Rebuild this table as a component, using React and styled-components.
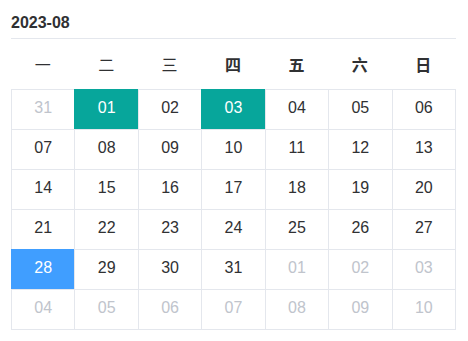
import styled, { createGlobalStyle } from "styled-components";

const GlobalStyle = createGlobalStyle`
  html, body {
    margin: 0;
    padding: 0;
    background: #ffffff;
  }
  body {
    font-family: "Liberation Sans", Arial, "Noto Sans CJK SC", sans-serif;
    color: #303133;
  }
`;

const COLORS = {
  text: "#303133",
  muted: "#c0c4cc",
  line: "#e4e7ed",
  teal: "#07a69b",
  blue: "#409eff",
};

const Wrapper = styled.div`
  width: 445px;
  margin-left: 11px;
`;

const Title = styled.div`
  padding: 12px 0 4px;
  line-height: 22px;
  font-size: 16px;
  font-weight: bold;
  color: ${COLORS.text};
  border-bottom: 1px solid ${COLORS.line};
`;

const WeekRow = styled.div`
  display: grid;
  grid-template-columns: repeat(7, 1fr);
  height: 50px;
  margin-right: 1px;
`;

const WeekDay = styled.div`
  display: flex;
  align-items: center;
  justify-content: center;
  padding-bottom: 1px;
  font-family: "Noto Sans CJK SC", sans-serif;
  font-size: 16px;
  font-weight: ${(p) => (p.$heavy ? 700 : 400)};
  color: ${COLORS.text};
`;

const Grid = styled.div`
  display: grid;
  grid-template-columns: repeat(7, 1fr);
  grid-auto-rows: 40px;
  border-right: 1px solid ${COLORS.line};
  border-bottom: 1px solid ${COLORS.line};
`;

const fills = { teal: COLORS.teal, blue: COLORS.blue };

const Cell = styled.div`
  box-sizing: border-box;
  display: flex;
  align-items: center;
  justify-content: center;
  padding-bottom: 3px;
  font-size: 16px;
  border-left: 1px solid ${(p) => (p.$fill ? "transparent" : COLORS.line)};
  border-top: 1px solid ${(p) => (p.$fill ? "transparent" : COLORS.line)};
  background: ${(p) => (p.$fill ? fills[p.$fill] : "transparent")};
  color: ${(p) => (p.$fill ? "#ffffff" : p.$muted ? COLORS.muted : COLORS.text)};
`;

const weekDays = [
  { label: "一" },
  { label: "二" },
  { label: "三" },
  { label: "四", heavy: true },
  { label: "五", heavy: true },
  { label: "六", heavy: true },
  { label: "日", heavy: true },
];

const pad = (n) => String(n).padStart(2, "0");

// August 2023 starts on a Tuesday; first cell is Mon 31 Jul
const buildDays = () => {
  const days = [{ n: 31, muted: true }];
  for (let d = 1; d <= 31; d++) days.push({ n: d });
  for (let d = 1; d <= 10; d++) days.push({ n: d, muted: true });
  return days;
};

const highlight = { 1: "teal", 3: "teal", 28: "blue" };

export default function App() {
  const days = buildDays();
  return (
    <>
      <GlobalStyle />
      <Wrapper>
        <Title>2023-08</Title>
        <WeekRow>
          {weekDays.map((w) => (
            <WeekDay key={w.label} $heavy={w.heavy}>
              {w.label}
            </WeekDay>
          ))}
        </WeekRow>
        <Grid>
          {days.map((d, i) => (
            <Cell
              key={i}
              $muted={d.muted}
              $fill={!d.muted ? highlight[d.n] : undefined}
            >
              {pad(d.n)}
            </Cell>
          ))}
        </Grid>
      </Wrapper>
    </>
  );
}
